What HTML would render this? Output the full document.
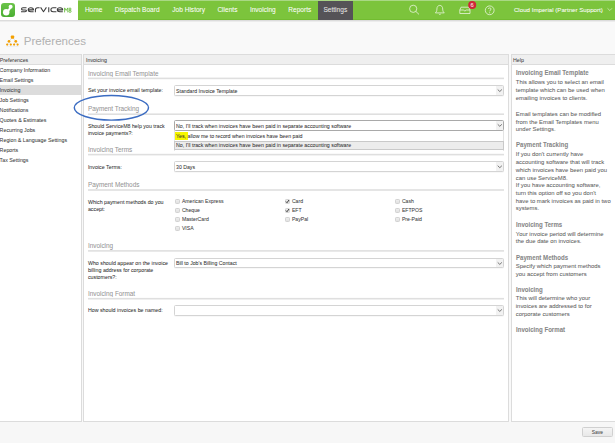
<!DOCTYPE html>
<html><head><meta charset="utf-8"><style>
html,body{margin:0;padding:0;width:615px;height:447px;overflow:hidden;background:#f9f9f9;position:relative}
.t{position:absolute;white-space:nowrap;line-height:10px;font-family:"Liberation Sans",sans-serif;-webkit-text-stroke:0.04px currentColor}
.r{position:absolute}
#wrap{position:absolute;left:0;top:0;width:615px;height:447px;overflow:hidden;}
</style></head><body><div id="wrap">
<div class="r" style="left:0px;top:0px;width:615px;height:447px;background:#f9f9f9"></div>
<div class="r" style="left:0px;top:0px;width:78px;height:20px;background:#fff"></div>
<div class="r" style="left:78px;top:0px;width:537px;height:20px;background:#7cc43c"></div>
<div class="r" style="left:78px;top:0px;width:537px;height:1px;background:#a9d884"></div>
<div class="r" style="left:78px;top:19px;width:537px;height:1px;background:#72bc30"></div>
<div class="r" style="left:318px;top:1px;width:35px;height:18.5px;background:#555357"></div>
<div class="r" style="left:0px;top:20px;width:615px;height:1px;background:#dcdcdc"></div>
<div class="r" style="left:0px;top:21px;width:615px;height:1px;background:#ececec"></div>
<svg class="r" style="left:0;top:2px" width="17" height="16" viewBox="0 0 17 16">
<defs><linearGradient id="lg" x1="0" y1="0" x2="0" y2="1"><stop offset="0" stop-color="#6cc44a"/><stop offset="1" stop-color="#4aae32"/></linearGradient></defs>
<rect x="1" y="1" width="14" height="14" rx="3" fill="url(#lg)"/>
<circle cx="6.2" cy="10.3" r="3.2" fill="#fff"/>
<circle cx="10.6" cy="4.8" r="2" fill="#fff"/>
<path d="M7.5 8 L9.3 5.5 L11.2 6.3 L8.8 9.8 Z" fill="#fff"/>
</svg>
<svg class="r" style="left:0;top:0" width="78" height="20" viewBox="0 0 78 20">
<g fill="none" stroke="#3c3c3c" stroke-width="1.05" stroke-linejoin="round">
<path d="M26.5 7.8 H23 Q21.5 7.8 21.5 8.9 Q21.5 9.9 23 9.9 H25 Q26.5 9.9 26.5 10.85 Q26.5 11.8 25 11.8 H21"/>
<path d="M28.2 9.85 H33.5 Q33.5 7.8 30.9 7.8 Q28.2 7.8 28.2 9.8 Q28.2 11.8 30.9 11.8 H33.6"/>
<path d="M35.4 12.3 V9.9 Q35.4 7.8 37.6 7.8 H39.6"/>
<path d="M40.6 7.4 L43.5 11.8 L46.4 7.4"/>
<path d="M48.75 7.3 V12.3"/>
<path d="M56.4 7.8 H53.1 Q50.9 7.8 50.9 9.8 Q50.9 11.8 53.1 11.8 H56.4"/>
<path d="M57.3 9.85 H62.7 Q62.7 7.8 60 7.8 Q57.3 7.8 57.3 9.8 Q57.3 11.8 60 11.8 H62.8"/>
</g>
<g fill="none" stroke="#62b836" stroke-width="0.85">
<path d="M64.6 12.4 V7.9 L66.2 10.4 L67.8 7.9 V12.4"/>
<circle cx="70" cy="9" r="1"/><circle cx="70" cy="11.3" r="1.1"/>
</g>
</svg>
<div class="t" style="left:84.90px;top:5px;line-height:9px;font-size:6.55px;color:#ffffff;font-weight:normal;">Home</div>
<div class="t" style="left:114.80px;top:5px;line-height:9px;font-size:6.55px;color:#ffffff;font-weight:normal;">Dispatch Board</div>
<div class="t" style="left:172.30px;top:5px;line-height:9px;font-size:6.55px;color:#ffffff;font-weight:normal;">Job History</div>
<div class="t" style="left:217.40px;top:5px;line-height:9px;font-size:6.55px;color:#ffffff;font-weight:normal;">Clients</div>
<div class="t" style="left:249.90px;top:5px;line-height:9px;font-size:6.55px;color:#ffffff;font-weight:normal;">Invoicing</div>
<div class="t" style="left:288.30px;top:5px;line-height:9px;font-size:6.55px;color:#ffffff;font-weight:normal;">Reports</div>
<div class="t" style="left:323.40px;top:5px;line-height:9px;font-size:6.6px;color:#e6e6e6;font-weight:normal;">Settings</div>
<div class="t" style="left:513.90px;top:5px;line-height:9px;font-size:6.17px;color:#ffffff;font-weight:normal;">Cloud Imperial (Partner Support)</div>
<svg class="r" style="left:400px;top:0" width="215" height="20" viewBox="0 0 215 20">
<g fill="none" stroke="#e8f4dc" stroke-width="0.8">
<circle cx="13.2" cy="8.8" r="3.6"/><path d="M15.8 11.4 L19 14.4"/>
<path d="M35.3 12.9 L44.3 12.9 C43 11.8 42.7 10.8 42.7 9 C42.7 6.6 41.4 5.4 39.8 5.4 C38.2 5.4 36.9 6.6 36.9 9 C36.9 10.8 36.6 11.8 35.3 12.9 Z M38.8 13.9 C39.1 14.6 40.5 14.6 40.8 13.9"/>
<path d="M59.8 10 L61 7.2 L68.8 7.2 L70 10 L70 13.5 L59.8 13.5 Z M59.8 10 L63.3 10 L64.9 11 L66.5 10 L70 10"/>
<circle cx="89.7" cy="10.3" r="4.4"/>
<path d="M88.3 9 C88.3 7.6 91.1 7.6 91.1 9 C91.1 10 89.7 10.2 89.7 11.3"/>
</g>
<circle cx="89.7" cy="12.8" r="0.5" fill="#eef7e6"/>
<circle cx="72.2" cy="4.9" r="4" fill="#d0243a"/>
<text x="72.2" y="7" font-family="Liberation Sans" font-size="5.8" fill="#fff" text-anchor="middle">6</text>
<path d="M207.5 8.3 L209.8 10.5 L212 8.3" fill="none" stroke="#d8efc4" stroke-width="0.7"/>
</svg>
<svg class="r" style="left:4px;top:33px" width="18" height="16" viewBox="0 0 18 16">
<g stroke="#c5ccd6" stroke-width="0.5" fill="none"><path d="M8.5 4 L5 8.3 L3.2 11.6 M5 8.3 L6.8 11.6 M8.5 4 L11.8 8.3 L10.1 11.6 M11.8 8.3 L13.6 11.6"/></g>
<rect x="6.85" y="2.5" width="3.3" height="3.3" rx="0.8" fill="#f4a000"/>
<circle cx="5" cy="8.3" r="1.35" fill="#f4a000"/><circle cx="11.8" cy="8.3" r="1.35" fill="#f4a000"/>
<circle cx="3.2" cy="11.6" r="1.12" fill="#f4a000"/><circle cx="6.8" cy="11.6" r="1.12" fill="#f4a000"/>
<circle cx="10.1" cy="11.6" r="1.12" fill="#f4a000"/><circle cx="13.6" cy="11.6" r="1.12" fill="#f4a000"/>
<rect x="2.5" y="13.3" width="12" height="0.6" fill="#e3e7ee"/>
</svg>
<div class="t" style="left:23.70px;top:34px;line-height:14px;font-size:11.56px;color:#b3b3b3;font-weight:normal;">Preferences</div>
<div class="r" style="left:-2px;top:54px;width:84px;height:368px;background:#fff;border:1px solid #dcdcdc;box-sizing:border-box"></div>
<div class="r" style="left:-1px;top:55px;width:82px;height:9.5px;background:#efefef"></div>
<div class="r" style="left:-2px;top:64px;width:84px;height:1px;background:#dcdcdc"></div>
<div class="t" style="left:-0.30px;top:56px;line-height:8px;font-size:5.3px;color:#444;font-weight:normal;">Preferences</div>
<div class="r" style="left:83px;top:54px;width:426px;height:368px;background:#fff;border:1px solid #dcdcdc;box-sizing:border-box"></div>
<div class="r" style="left:84px;top:55px;width:424px;height:9.5px;background:#efefef"></div>
<div class="r" style="left:83px;top:64px;width:426px;height:1px;background:#dcdcdc"></div>
<div class="t" style="left:86.00px;top:56px;line-height:8px;font-size:5.3px;color:#444;font-weight:normal;">Invoicing</div>
<div class="r" style="left:511px;top:54px;width:106px;height:368px;background:#fff;border:1px solid #dcdcdc;box-sizing:border-box"></div>
<div class="r" style="left:512px;top:55px;width:104px;height:9.5px;background:#efefef"></div>
<div class="r" style="left:511px;top:64px;width:106px;height:1px;background:#dcdcdc"></div>
<div class="t" style="left:513.00px;top:56px;line-height:8px;font-size:5.3px;color:#444;font-weight:normal;">Help</div>
<div class="r" style="left:-1px;top:85px;width:82px;height:9.7px;background:#dcdcdc"></div>
<div class="t" style="left:-0.40px;top:66px;line-height:8px;font-size:5.3px;color:#3c3c3c;font-weight:normal;">Company Information</div>
<div class="t" style="left:-0.40px;top:76px;line-height:8px;font-size:5.3px;color:#3c3c3c;font-weight:normal;">Email Settings</div>
<div class="t" style="left:-0.40px;top:86px;line-height:8px;font-size:5.3px;color:#3c3c3c;font-weight:normal;">Invoicing</div>
<div class="t" style="left:-0.40px;top:96px;line-height:8px;font-size:5.3px;color:#3c3c3c;font-weight:normal;">Job Settings</div>
<div class="t" style="left:-0.40px;top:106px;line-height:8px;font-size:5.3px;color:#3c3c3c;font-weight:normal;">Notifications</div>
<div class="t" style="left:-0.40px;top:116px;line-height:8px;font-size:5.3px;color:#3c3c3c;font-weight:normal;">Quotes &amp; Estimates</div>
<div class="t" style="left:-0.40px;top:126px;line-height:8px;font-size:5.3px;color:#3c3c3c;font-weight:normal;">Recurring Jobs</div>
<div class="t" style="left:-0.40px;top:136px;line-height:8px;font-size:5.3px;color:#3c3c3c;font-weight:normal;">Region &amp; Language Settings</div>
<div class="t" style="left:-0.40px;top:146px;line-height:8px;font-size:5.3px;color:#3c3c3c;font-weight:normal;">Reports</div>
<div class="t" style="left:-0.40px;top:156px;line-height:8px;font-size:5.3px;color:#3c3c3c;font-weight:normal;">Tax Settings</div>
<div class="t" style="left:87.90px;top:69px;line-height:9px;font-size:6.4px;color:#959595;font-weight:normal;">Invoicing Email Template</div>
<div class="r" style="left:88px;top:77px;width:416px;height:1px;background:rgb(242,242,242)"></div>
<div class="r" style="left:88px;top:78px;width:416px;height:1px;background:rgb(223,223,223)"></div>
<div class="r" style="left:88px;top:79px;width:416px;height:1px;background:rgb(249,249,249)"></div>
<div class="t" style="left:87.90px;top:86px;line-height:8px;font-size:5.3px;color:#333;font-weight:normal;">Set your invoice email template:</div>
<div class="r" style="left:174px;top:85.2px;width:330px;height:11px;background:#fff;border:1px solid #d4d4d4;border-radius:1.5px;box-sizing:border-box;box-shadow:0 0.5px 0.5px rgba(0,0,0,0.06)"></div>
<div class="r" style="left:495.5px;top:86.2px;width:7.5px;height:9px;background:#f2f2f2"></div>
<svg class="r" style="left:496px;top:85.2px" width="8" height="11" viewBox="0 0 8 11"><path d="M1.7 4.5 L3.8 6.5 L5.9 4.5" fill="none" stroke="#606060" stroke-width="0.85"/></svg>
<div class="t" style="left:176.00px;top:87px;line-height:8px;font-size:5.2px;color:#333;font-weight:normal;">Standard Invoice Template</div>
<div class="t" style="left:87.90px;top:104px;line-height:9px;font-size:6.4px;color:#959595;font-weight:normal;">Payment Tracking</div>
<div class="r" style="left:88px;top:113px;width:416px;height:1px;background:rgb(236,236,236)"></div>
<div class="r" style="left:88px;top:114px;width:416px;height:1px;background:rgb(223,223,223)"></div>
<div class="t" style="left:87.90px;top:122px;line-height:8px;font-size:5.25px;color:#333;font-weight:normal;">Should ServiceM8 help you track</div>
<div class="t" style="left:87.90px;top:129px;line-height:8px;font-size:5.25px;color:#333;font-weight:normal;">invoice payments?:</div>
<div class="t" style="left:87.90px;top:145px;line-height:9px;font-size:6.4px;color:#959595;font-weight:normal;">Invoicing Terms</div>
<div class="r" style="left:88px;top:153px;width:416px;height:1px;background:rgb(249,249,249)"></div>
<div class="r" style="left:88px;top:154px;width:416px;height:1px;background:rgb(223,223,223)"></div>
<div class="r" style="left:88px;top:155px;width:416px;height:1px;background:rgb(242,242,242)"></div>
<div class="t" style="left:87.90px;top:163px;line-height:8px;font-size:5.3px;color:#333;font-weight:normal;">Invoice Terms:</div>
<div class="r" style="left:174px;top:161.1px;width:330px;height:11.4px;background:#fff;border:1px solid #d4d4d4;border-radius:1.5px;box-sizing:border-box;box-shadow:0 0.5px 0.5px rgba(0,0,0,0.06)"></div>
<div class="r" style="left:495.5px;top:162.1px;width:7.5px;height:9.4px;background:#f2f2f2"></div>
<svg class="r" style="left:496px;top:161.1px" width="8" height="11.4" viewBox="0 0 8 11.4"><path d="M1.7 4.7 L3.8 6.7 L5.9 4.7" fill="none" stroke="#606060" stroke-width="0.85"/></svg>
<div class="t" style="left:176.00px;top:163px;line-height:8px;font-size:5.2px;color:#333;font-weight:normal;">30 Days</div>
<div class="t" style="left:87.90px;top:180px;line-height:9px;font-size:6.4px;color:#959595;font-weight:normal;">Payment Methods</div>
<div class="r" style="left:88px;top:189px;width:416px;height:1px;background:rgb(229,229,229)"></div>
<div class="r" style="left:88px;top:190px;width:416px;height:1px;background:rgb(229,229,229)"></div>
<div class="t" style="left:87.90px;top:198px;line-height:8px;font-size:5.3px;color:#333;font-weight:normal;">Which payment methods do you</div>
<div class="t" style="left:87.90px;top:205px;line-height:8px;font-size:5.3px;color:#333;font-weight:normal;">accept:</div>
<div class="r" style="left:174.8px;top:198.6px;width:5px;height:5px;background:linear-gradient(#ededed,#e2e2e2);border:0.7px solid #d2d2d2;border-radius:1.2px;box-sizing:border-box"></div>
<div class="t" style="left:181.90px;top:197px;line-height:8px;font-size:5.15px;color:#3a3a3a;font-weight:normal;">American Express</div>
<div class="r" style="left:284.8px;top:198.6px;width:5px;height:5px;background:linear-gradient(#ededed,#e2e2e2);border:0.7px solid #d2d2d2;border-radius:1.2px;box-sizing:border-box"></div>
<svg class="r" style="left:285px;top:198.6px" width="5" height="5" viewBox="0 0 5 5"><path d="M1 2.6 L2 3.7 L4 1" fill="none" stroke="#222" stroke-width="0.9"/></svg>
<div class="t" style="left:291.90px;top:197px;line-height:8px;font-size:5.15px;color:#3a3a3a;font-weight:normal;">Card</div>
<div class="r" style="left:394.8px;top:198.6px;width:5px;height:5px;background:linear-gradient(#ededed,#e2e2e2);border:0.7px solid #d2d2d2;border-radius:1.2px;box-sizing:border-box"></div>
<div class="t" style="left:401.90px;top:197px;line-height:8px;font-size:5.15px;color:#3a3a3a;font-weight:normal;">Cash</div>
<div class="r" style="left:174.8px;top:207.7px;width:5px;height:5px;background:linear-gradient(#ededed,#e2e2e2);border:0.7px solid #d2d2d2;border-radius:1.2px;box-sizing:border-box"></div>
<div class="t" style="left:181.90px;top:206px;line-height:8px;font-size:5.15px;color:#3a3a3a;font-weight:normal;">Cheque</div>
<div class="r" style="left:284.8px;top:207.7px;width:5px;height:5px;background:linear-gradient(#ededed,#e2e2e2);border:0.7px solid #d2d2d2;border-radius:1.2px;box-sizing:border-box"></div>
<svg class="r" style="left:285px;top:207.7px" width="5" height="5" viewBox="0 0 5 5"><path d="M1 2.6 L2 3.7 L4 1" fill="none" stroke="#222" stroke-width="0.9"/></svg>
<div class="t" style="left:291.90px;top:206px;line-height:8px;font-size:5.15px;color:#3a3a3a;font-weight:normal;">EFT</div>
<div class="r" style="left:394.8px;top:207.7px;width:5px;height:5px;background:linear-gradient(#ededed,#e2e2e2);border:0.7px solid #d2d2d2;border-radius:1.2px;box-sizing:border-box"></div>
<div class="t" style="left:401.90px;top:206px;line-height:8px;font-size:5.15px;color:#3a3a3a;font-weight:normal;">EFTPOS</div>
<div class="r" style="left:174.8px;top:216.8px;width:5px;height:5px;background:linear-gradient(#ededed,#e2e2e2);border:0.7px solid #d2d2d2;border-radius:1.2px;box-sizing:border-box"></div>
<div class="t" style="left:181.90px;top:215px;line-height:8px;font-size:5.15px;color:#3a3a3a;font-weight:normal;">MasterCard</div>
<div class="r" style="left:284.8px;top:216.8px;width:5px;height:5px;background:linear-gradient(#ededed,#e2e2e2);border:0.7px solid #d2d2d2;border-radius:1.2px;box-sizing:border-box"></div>
<div class="t" style="left:291.90px;top:215px;line-height:8px;font-size:5.15px;color:#3a3a3a;font-weight:normal;">PayPal</div>
<div class="r" style="left:394.8px;top:216.8px;width:5px;height:5px;background:linear-gradient(#ededed,#e2e2e2);border:0.7px solid #d2d2d2;border-radius:1.2px;box-sizing:border-box"></div>
<div class="t" style="left:401.90px;top:215px;line-height:8px;font-size:5.15px;color:#3a3a3a;font-weight:normal;">Pre-Paid</div>
<div class="r" style="left:174.8px;top:225.9px;width:5px;height:5px;background:linear-gradient(#ededed,#e2e2e2);border:0.7px solid #d2d2d2;border-radius:1.2px;box-sizing:border-box"></div>
<div class="t" style="left:181.90px;top:224px;line-height:8px;font-size:5.15px;color:#3a3a3a;font-weight:normal;">VISA</div>
<div class="t" style="left:87.90px;top:241px;line-height:9px;font-size:6.4px;color:#959595;font-weight:normal;">Invoicing</div>
<div class="r" style="left:88px;top:250px;width:416px;height:1px;background:rgb(226,226,226)"></div>
<div class="r" style="left:88px;top:251px;width:416px;height:1px;background:rgb(233,233,233)"></div>
<div class="t" style="left:87.90px;top:259px;line-height:8px;font-size:5.3px;color:#333;font-weight:normal;">Who should appear on the invoice</div>
<div class="t" style="left:87.90px;top:266px;line-height:8px;font-size:5.3px;color:#333;font-weight:normal;">billing address for corporate</div>
<div class="t" style="left:87.90px;top:273px;line-height:8px;font-size:5.3px;color:#333;font-weight:normal;">customers?:</div>
<div class="r" style="left:174px;top:257.6px;width:330px;height:10.8px;background:#fff;border:1px solid #d4d4d4;border-radius:1.5px;box-sizing:border-box;box-shadow:0 0.5px 0.5px rgba(0,0,0,0.06)"></div>
<div class="r" style="left:495.5px;top:258.6px;width:7.5px;height:8.8px;background:#f2f2f2"></div>
<svg class="r" style="left:496px;top:257.6px" width="8" height="10.8" viewBox="0 0 8 10.8"><path d="M1.7 4.4 L3.8 6.4 L5.9 4.4" fill="none" stroke="#606060" stroke-width="0.85"/></svg>
<div class="t" style="left:176.00px;top:259px;line-height:8px;font-size:5.2px;color:#333;font-weight:normal;">Bill to Job's Billing Contact</div>
<div class="t" style="left:87.90px;top:289px;line-height:9px;font-size:6.4px;color:#959595;font-weight:normal;">Invoicing Format</div>
<div class="r" style="left:88px;top:297px;width:416px;height:1px;background:rgb(252,252,252)"></div>
<div class="r" style="left:88px;top:298px;width:416px;height:1px;background:rgb(223,223,223)"></div>
<div class="r" style="left:88px;top:299px;width:416px;height:1px;background:rgb(239,239,239)"></div>
<div class="t" style="left:87.90px;top:306px;line-height:8px;font-size:5.3px;color:#333;font-weight:normal;">How should invoices be named:</div>
<div class="r" style="left:174px;top:305.3px;width:330px;height:10.8px;background:#fff;border:1px solid #d4d4d4;border-radius:1.5px;box-sizing:border-box;box-shadow:0 0.5px 0.5px rgba(0,0,0,0.06)"></div>
<div class="r" style="left:495.5px;top:306.3px;width:7.5px;height:8.8px;background:#f2f2f2"></div>
<svg class="r" style="left:496px;top:305.3px" width="8" height="10.8" viewBox="0 0 8 10.8"><path d="M1.7 4.4 L3.8 6.4 L5.9 4.4" fill="none" stroke="#606060" stroke-width="0.85"/></svg>
<div class="r" style="left:174px;top:120.2px;width:330px;height:10.6px;background:#fff;border:1px solid #a9a9a9;border-radius:1.5px;box-sizing:border-box;box-shadow:0 0.5px 0.5px rgba(0,0,0,0.06)"></div>
<div class="r" style="left:495.5px;top:121.2px;width:7.5px;height:8.6px;background:#f2f2f2"></div>
<svg class="r" style="left:496px;top:120.2px" width="8" height="10.6" viewBox="0 0 8 10.6"><path d="M1.7 4.3 L3.8 6.3 L5.9 4.3" fill="none" stroke="#606060" stroke-width="0.85"/></svg>
<div class="t" style="left:176.00px;top:122px;line-height:8px;font-size:5.28px;color:#333;font-weight:normal;">No, I'll track when invoices have been paid in separate accounting software</div>
<div class="r" style="left:174px;top:130.8px;width:330px;height:20px;background:#fff;border-left:1px solid #e4e4e4;border-right:1px solid #e4e4e4;box-sizing:border-box"></div>
<div class="r" style="left:175px;top:132px;width:12.8px;height:8.3px;background:#f6f600"></div>
<div class="t" style="left:176.00px;top:132px;line-height:8px;font-size:5.27px;color:#333;font-weight:normal;">Yes, allow me to record when invoices have been paid</div>
<div class="r" style="left:174px;top:141.1px;width:330px;height:9.4px;background:#ececec;border:1px solid #c9c9c9;box-sizing:border-box"></div>
<div class="t" style="left:176.00px;top:141px;line-height:8px;font-size:5.28px;color:#333;font-weight:normal;">No, I'll track when invoices have been paid in separate accounting software</div>
<svg class="r" style="left:70px;top:92px" width="84" height="32" viewBox="0 0 84 32"><ellipse cx="41.4" cy="15.8" rx="37.1" ry="12.3" fill="none" stroke="#3b6cc2" stroke-width="1.45"/></svg>
<div class="t" style="left:515.80px;top:68px;line-height:9px;font-size:6.7px;color:#858585;font-weight:bold;transform:scaleX(0.9104);transform-origin:0 0;">Invoicing Email Template</div>
<div class="t" style="left:515.80px;top:78px;line-height:8px;font-size:5.92px;color:#616161;font-weight:normal;">This allows you to select an email</div>
<div class="t" style="left:515.80px;top:86px;line-height:8px;font-size:5.92px;color:#616161;font-weight:normal;">template which can be used when</div>
<div class="t" style="left:515.80px;top:94px;line-height:8px;font-size:5.92px;color:#616161;font-weight:normal;">emailing invoices to clients.</div>
<div class="t" style="left:515.80px;top:110px;line-height:8px;font-size:5.92px;color:#616161;font-weight:normal;">Email templates can be modified</div>
<div class="t" style="left:515.80px;top:118px;line-height:8px;font-size:5.92px;color:#616161;font-weight:normal;">from the Email Templates menu</div>
<div class="t" style="left:515.80px;top:125px;line-height:8px;font-size:5.92px;color:#616161;font-weight:normal;">under Settings.</div>
<div class="t" style="left:515.80px;top:140px;line-height:9px;font-size:6.7px;color:#858585;font-weight:bold;transform:scaleX(0.9104);transform-origin:0 0;">Payment Tracking</div>
<div class="t" style="left:515.80px;top:150px;line-height:8px;font-size:5.92px;color:#616161;font-weight:normal;">If you don't currently have</div>
<div class="t" style="left:515.80px;top:158px;line-height:8px;font-size:5.92px;color:#616161;font-weight:normal;">accounting software that will track</div>
<div class="t" style="left:515.80px;top:166px;line-height:8px;font-size:5.92px;color:#616161;font-weight:normal;">which invoices have been paid you</div>
<div class="t" style="left:515.80px;top:174px;line-height:8px;font-size:5.92px;color:#616161;font-weight:normal;">can use ServiceM8.</div>
<div class="t" style="left:515.80px;top:181px;line-height:8px;font-size:5.92px;color:#616161;font-weight:normal;">If you have accounting software,</div>
<div class="t" style="left:515.80px;top:189px;line-height:8px;font-size:5.92px;color:#616161;font-weight:normal;">turn this option off so you don't</div>
<div class="t" style="left:515.80px;top:197px;line-height:8px;font-size:5.92px;color:#616161;font-weight:normal;">have to mark invoices as paid in two</div>
<div class="t" style="left:515.80px;top:204px;line-height:8px;font-size:5.92px;color:#616161;font-weight:normal;">systems.</div>
<div class="t" style="left:515.80px;top:220px;line-height:9px;font-size:6.7px;color:#858585;font-weight:bold;transform:scaleX(0.9104);transform-origin:0 0;">Invoicing Terms</div>
<div class="t" style="left:515.80px;top:230px;line-height:8px;font-size:5.92px;color:#616161;font-weight:normal;">Your invoice period will determine</div>
<div class="t" style="left:515.80px;top:237px;line-height:8px;font-size:5.92px;color:#616161;font-weight:normal;">the due date on invoices.</div>
<div class="t" style="left:515.80px;top:253px;line-height:9px;font-size:6.7px;color:#858585;font-weight:bold;transform:scaleX(0.9104);transform-origin:0 0;">Payment Methods</div>
<div class="t" style="left:515.80px;top:262px;line-height:8px;font-size:5.92px;color:#616161;font-weight:normal;">Specify which payment methods</div>
<div class="t" style="left:515.80px;top:270px;line-height:8px;font-size:5.92px;color:#616161;font-weight:normal;">you accept from customers</div>
<div class="t" style="left:515.80px;top:285px;line-height:9px;font-size:6.7px;color:#858585;font-weight:bold;transform:scaleX(0.9104);transform-origin:0 0;">Invoicing</div>
<div class="t" style="left:515.80px;top:294px;line-height:8px;font-size:5.92px;color:#616161;font-weight:normal;">This will determine who your</div>
<div class="t" style="left:515.80px;top:302px;line-height:8px;font-size:5.92px;color:#616161;font-weight:normal;">invoices are addressed to for</div>
<div class="t" style="left:515.80px;top:310px;line-height:8px;font-size:5.92px;color:#616161;font-weight:normal;">corporate customers</div>
<div class="t" style="left:515.80px;top:325px;line-height:9px;font-size:6.7px;color:#858585;font-weight:bold;transform:scaleX(0.9104);transform-origin:0 0;">Invoicing Format</div>
<div class="r" style="left:0px;top:422px;width:615px;height:21px;background:#f7f7f7"></div>
<div class="r" style="left:0px;top:443px;width:615px;height:4px;background:#fff"></div>
<div class="r" style="left:582px;top:427px;width:31px;height:10px;background:linear-gradient(#f4f4f4,#e8e8e8);border:1px solid #d0d0d0;border-radius:1.5px;box-sizing:border-box"></div>
<div class="t" style="left:591.80px;top:429px;line-height:7px;font-size:4.9px;color:#444;font-weight:normal;">Save</div>
</div></body></html>
